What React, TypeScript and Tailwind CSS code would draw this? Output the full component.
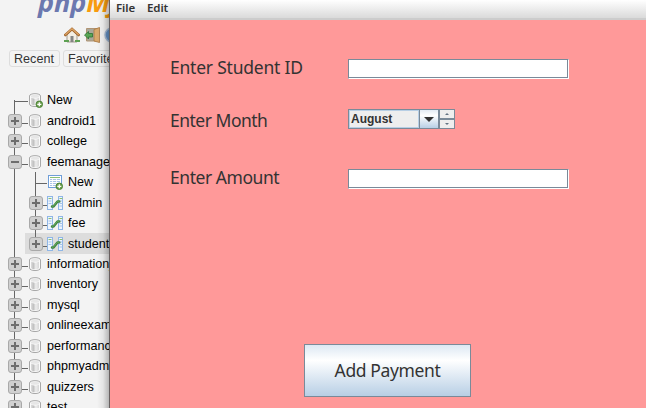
import React from "react";

function Database({ add = false }: { add?: boolean }) {
  return (
    <svg width="16" height="16" viewBox="0 0 16 16" className="shrink-0">
      <defs>
        <linearGradient id="cyl" x1="0" x2="1" y1="0" y2="0">
          <stop offset="0" stopColor="#dedede" />
          <stop offset=".3" stopColor="#c0c0c0" />
          <stop offset=".6" stopColor="#ededed" />
          <stop offset="1" stopColor="#d6d6d6" />
        </linearGradient>
      </defs>
      <path d="M2.500 4C2.500 .9 13.500 .9 13.500 4V12C13.500 15.400 2.500 15.400 2.500 12Z" fill="#fbfbfb" stroke="#a8a8a8" />
      <path d="M4 5.500C6 7 10 7 12 5.500V12C11 13.800 5 13.800 4 12Z" fill="url(#cyl)" />
      <ellipse cx="8" cy="4.200" rx="4.200" ry="1.500" fill="#e6e6e6" />
      {add && <AddBadge />}
    </svg>
  );
}

function AddBadge() {
  return (
    <g>
      <circle cx="12.300" cy="12.300" r="3.300" fill="#6ea04f" stroke="#3f7a2c" strokeWidth=".8" />
      <path d="M12.300 10.300v4M10.300 12.300h4" stroke="#fff" strokeWidth="1.300" />
    </g>
  );
}

function NewTable() {
  return (
    <svg width="16" height="16" viewBox="0 0 16 16" className="shrink-0">
      <rect x="1.500" y="1.500" width="13" height="12" fill="#fff" stroke="#6f9ed8" />
      <path d="M3 3.500h10" stroke="#8abf75" />
      <path d="M3 5.500h10M3 7.500h10M3 9.500h10M3 11.500h8" stroke="#a9c3e6" />
      <path d="M5.500 5v7M9.500 5v7" stroke="#fff" strokeWidth=".8" />
      <AddBadge />
    </svg>
  );
}

function Structure() {
  return (
    <svg width="16" height="16" viewBox="0 0 16 16" className="shrink-0">
      <rect x=".5" y="1.500" width="5" height="13" fill="#edf4fd" stroke="#8fb6e6" />
      <rect x="11.500" y="1.500" width="4" height="13" fill="#edf4fd" stroke="#8fb6e6" />
      <path d="M1.500 3.500h3M12.500 3.500h3" stroke="#8abf75" />
      <path d="M1.500 6h3M1.500 8.500h3M12.500 6h3M12.500 8.500h3M12.500 11h3" stroke="#a4c3ea" />
      <path d="M5 11.500H6.500L10.500 6.500H12.300" fill="none" stroke="#3f8240" strokeWidth="2.500" strokeLinejoin="round" strokeLinecap="round" />
      <path d="M5 11.300H6.300L10.300 6.300H12.100" fill="none" stroke="#64aa5c" strokeWidth="1" />
    </svg>
  );
}

function Expander({ open = false }: { open?: boolean }) {
  return (
    <svg width="14" height="14" viewBox="0 0 14 14" className="shrink-0">
      <rect x=".5" y=".5" width="13" height="13" rx="2.500" fill="#d0d0d0" stroke="#a9a9a9" />
      <path d={open ? "M3 7h8" : "M3 7h8M7 3v8"} stroke="#6e6e6e" strokeWidth="2" />
    </svg>
  );
}

type Node = { label: string; kind: "newdb" | "db" | "open" | "newtable" | "table"; selected?: boolean };

const nodes: Node[] = [
  { label: "New", kind: "newdb" },
  { label: "android1", kind: "db" },
  { label: "college", kind: "db" },
  { label: "feemanagement", kind: "open" },
  { label: "New", kind: "newtable" },
  { label: "admin", kind: "table" },
  { label: "fee", kind: "table" },
  { label: "student", kind: "table", selected: true },
  { label: "information_schema", kind: "db" },
  { label: "inventory", kind: "db" },
  { label: "mysql", kind: "db" },
  { label: "onlineexam", kind: "db" },
  { label: "performance_schema", kind: "db" },
  { label: "phpmyadmin", kind: "db" },
  { label: "quizzers", kind: "db" },
  { label: "test", kind: "db" },
];

function TreeRow({ node }: { node: Node }) {
  const { kind, label, selected } = node;
  const child = kind === "newtable" || kind === "table";
  const isNew = kind === "newdb" || kind === "newtable";
  return (
    <div className="flex h-[20.47px] shrink-0">
      {child && (
        <div className="flex w-[25px] shrink-0 pl-[14px]">
          <i className="w-px bg-[#666]" />
        </div>
      )}
      <div className={`flex min-w-0 flex-1 items-center ${child ? "" : "pl-[8px]"} ${selected ? "bg-[#dddddd]" : ""}`}>
        <div className={`grid h-full shrink-0 items-center ${child ? "ml-[4px] w-[18px]" : "w-[20px]"}`}>
          <div className={`col-start-1 row-start-1 flex h-full pl-[6px] ${kind === "newdb" ? "items-end" : ""}`}>
            <i className={`w-px bg-[#666] ${kind === "newdb" ? "h-[10px]" : kind === "table" && selected ? "h-1/2" : "h-full"}`} />
          </div>
          {isNew ? (
            <i className="col-start-1 row-start-1 mt-[3px] ml-[6px] h-px bg-[#666]" />
          ) : (
            <>
              <i className="col-start-1 row-start-1 mt-[5px] ml-[13px] h-px bg-[#666]" />
              <div className="z-10 col-start-1 row-start-1"><Expander open={kind === "open"} /></div>
            </>
          )}
        </div>
        <div className={child ? "" : "-ml-px"}>
          {kind === "newtable" ? <NewTable /> : kind === "table" ? <Structure /> : <Database add={kind === "newdb"} />}
        </div>
        <span className={`whitespace-nowrap text-[12.6px] leading-[20px] text-black ${child ? "ml-[5px]" : "ml-[4px]"}`}>{label}</span>
      </div>
    </div>
  );
}

function Sidebar() {
  return (
    <aside className="relative flex w-[109px] shrink-0 flex-col overflow-hidden bg-[#f3f3f3] font-['Liberation_Sans',sans-serif]">
      <div className="flex h-[27px] shrink-0 pl-[38px]">
        <div className="-mt-[16px] font-['Open_Sans',sans-serif] text-[27px] leading-[35px] font-bold whitespace-nowrap italic">
          <span className="tracking-[-0.1px] text-[#6c78af]">php</span><span className="tracking-[-3px] text-[#f89c0e]">MyAdmin</span>
        </div>
      </div>
      <div className="flex h-[16px] shrink-0 gap-[4px] pl-[64px]">
        <svg width="16" height="16" viewBox="0 0 16 16" className="shrink-0">
          <path d="M3 8L8 3l5 5v7H3Z" fill="#f3eee4" stroke="#a29b8f" />
          <path d="M6.500 9h3v6h-3Z" fill="#858585" />
          <path d="M1.300 8L8 2l6.700 6" fill="none" stroke="#a5662b" strokeWidth="2.600" strokeLinecap="round" />
          <path d="M1.300 7.700L8 1.700l6.700 6" fill="none" stroke="#dca568" strokeWidth="1.200" />
          <path d="M0 14h5M11 14h5" stroke="#5da052" strokeWidth="2.200" />
        </svg>
        <svg width="16" height="16" viewBox="0 0 16 16" className="shrink-0">
          <path d="M2.500 1.500H14V14H2.500Z" fill="#a9a79a" stroke="#b09474" />
          <path d="M10 2.500L15.500 .5V15.500L10 14Z" fill="#d9a86c" stroke="#a8763f" strokeWidth=".8" />
          <path d="M.5 8L4.500 4.500V6.500H8.500V10H4.500V12Z" fill="#58a654" stroke="#2d7135" strokeWidth=".8" />
        </svg>
        <svg width="16" height="16" viewBox="0 0 16 16" className="shrink-0">
          <circle cx="8" cy="8" r="7" fill="#6795ca" stroke="#a9bdd7" strokeWidth="1.500" />
          <path d="M6 6a2 2 0 1 1 2 2v2M8 12v1" stroke="#fff" strokeWidth="1.600" fill="none" />
        </svg>
      </div>
      <div className="mt-[7px] flex shrink-0 gap-[3px] pl-[9px] text-[12.6px] leading-[16px] text-[#333]">
        <span className="h-[17px] w-[51px] shrink-0 rounded-[3px] border border-[#ddd] pl-[4px]">Recent</span>
        <span className="h-[17px] w-[62px] shrink-0 rounded-[3px] border border-[#ddd] pl-[4px]">Favorites</span>
      </div>
      <nav className="mt-[23px] flex flex-col">
        {nodes.map((node, i) => <TreeRow key={i} node={node} />)}
      </nav>
      <div className="absolute inset-y-0 right-0 w-[12px] bg-linear-to-r from-transparent via-black/6 to-black/25" />
    </aside>
  );
}

function TextField() {
  return (
    <div className="h-[20px] w-[221px] border border-t-[#7a8a99] border-r-white border-b-white border-l-[#7a8a99] bg-white">
      <div className="h-full w-full border-r border-b border-[#7a8a99]" />
    </div>
  );
}

function MonthPicker() {
  return (
    <div className="flex h-[20px]">
      <div className="flex w-[71px] border border-r-0 border-[#7a8a99]">
        <div className="flex-1 border border-[#b8cfe5] bg-[#eeeeee] pl-px font-['Liberation_Sans',sans-serif] text-[12px] leading-[16px] font-bold text-[#333]">August</div>
      </div>
      <div className="flex w-[20px] items-center justify-center border border-[#7a8a99] bg-linear-to-b from-[#e3ebf4] via-white via-30% to-[#b8cfe5]">
        <svg width="10" height="5"><path d="M0 0H10L5 5Z" fill="#333" /></svg>
      </div>
      <div className="flex w-[16px] flex-col">
        <div className="flex h-[10px] items-center justify-center border border-[#7a8a99] bg-[#eee]"><svg width="4" height="2"><path d="M0 2L2 0L4 2Z" fill="#637382" /></svg></div>
        <div className="flex h-[10px] items-center justify-center border border-[#7a8a99] bg-[#eee]"><svg width="4" height="2"><path d="M0 0L2 2L4 0Z" fill="#637382" /></svg></div>
      </div>
    </div>
  );
}

function FormRow({ label, labelClass, children }: { label: string; labelClass: string; children: React.ReactNode }) {
  return (
    <div className="flex h-[20px] items-start">
      <label className={`w-[178px] shrink-0 text-[17.5px] whitespace-nowrap ${labelClass}`}>{label}</label>
      {children}
    </div>
  );
}

export default function App() {
  return (
    <div className="flex h-[408px] w-[646px] overflow-hidden bg-[#f3f3f3]">
      <Sidebar />
      <main className="flex flex-1 flex-col border-l border-[#686060] bg-[#ff9999] font-['Noto_Sans',sans-serif] text-[#333]">
        <div className="flex h-[20px] shrink-0 gap-[12px] border-b-2 border-[#cccccc] bg-linear-to-b from-white to-[#dadada] pl-[6px] text-[11.5px] leading-[15px] font-semibold tracking-[-0.1px]">
          <span>File</span><span>Edit</span>
        </div>
        <div className="flex flex-col pt-[39px] pl-[60px]">
          <FormRow label="Enter Student ID" labelClass="leading-[17px] tracking-[-0.22px]"><TextField /></FormRow>
          <div className="mt-[30px]"><FormRow label="Enter Month" labelClass="leading-[22px] tracking-[-0.5px]"><MonthPicker /></FormRow></div>
          <div className="mt-[40px]"><FormRow label="Enter Amount" labelClass="leading-[17px] tracking-[-0.45px]"><TextField /></FormRow></div>
        </div>
        <button className="mt-[155px] ml-[194px] h-[53px] w-[167px] shrink-0 border border-[#7a8a99] bg-linear-to-b from-[#dde8f3] via-white via-30% to-[#b8cfe5] text-[17.5px] tracking-[-0.38px]">Add Payment</button>
      </main>
    </div>
  );
}
